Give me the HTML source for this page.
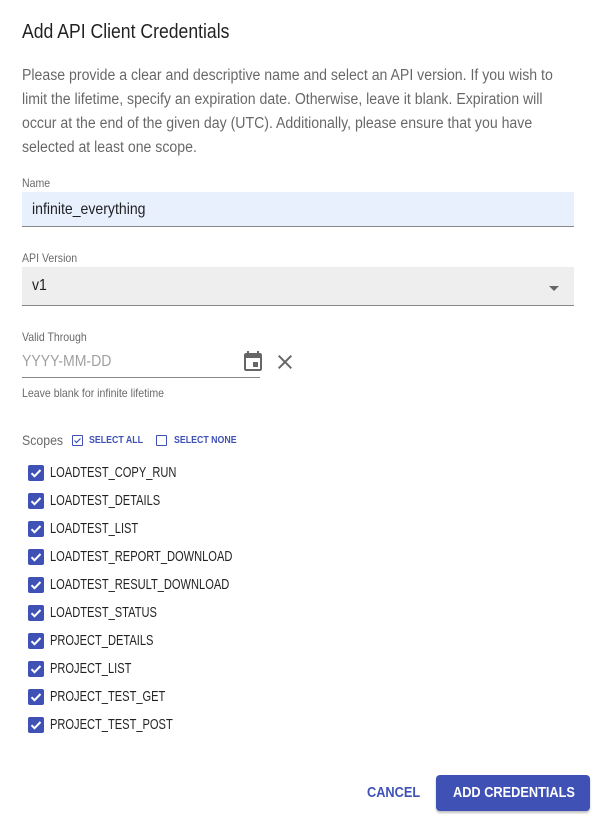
<!DOCTYPE html>
<html><head><style>
body{margin:0;width:596px;height:819px;background:#fff;font-family:"Liberation Sans",sans-serif;color:rgba(0,0,0,.87);position:relative;overflow:hidden}
.a{position:absolute;white-space:nowrap}
.c{transform:scaleX(.88);transform-origin:left}
.cb{position:absolute;left:28px;width:16px;height:16px;background:#3f51b5;border-radius:2px}
.cb svg{position:absolute;left:0;top:0}
.lab{left:50px;font-size:15px;transform:scaleX(.74)}
</style></head><body>
<div class="a c" style="left:22px;top:21px;font-size:20px">Add API Client Credentials</div>
<div class="a" style="left:22px;top:64px;font-size:15.5px;line-height:24px;color:rgba(0,0,0,.6);white-space:normal;width:590px;transform:scaleX(.91);transform-origin:left">Please provide a clear and descriptive name and select an API version. If you wish to limit the lifetime, specify an expiration date. Otherwise, leave it blank. Expiration will occur at the end of the given day (UTC). Additionally, please ensure that you have selected at least one scope.</div>
<div class="a c" style="left:22px;top:176px;font-size:12px;color:rgba(0,0,0,.6)">Name</div>
<div class="a" style="left:22px;top:192px;width:552px;height:34px;background:#e8f0fe;border-bottom:1px solid #888"></div>
<div class="a c" style="left:32px;top:201px;font-size:16px">infinite_everything</div>
<div class="a c" style="left:22px;top:251px;font-size:12px;color:rgba(0,0,0,.6)">API Version</div>
<div class="a" style="left:22px;top:267px;width:552px;height:38px;background:#eee;border-bottom:1px solid #888"></div>
<div class="a c" style="left:32px;top:277px;font-size:16px">v1</div>
<div class="a" style="left:549px;top:286px;width:0;height:0;border-left:5px solid transparent;border-right:5px solid transparent;border-top:5px solid #666"></div>
<div class="a c" style="left:22px;top:330px;font-size:12px;color:rgba(0,0,0,.6)">Valid Through</div>
<div class="a c" style="left:22px;top:353px;font-size:16px;color:rgba(0,0,0,.38)">YYYY-MM-DD</div>
<svg class="a" style="left:241px;top:350px" width="24" height="24" viewBox="0 0 24 24"><path fill="#666" d="M17 12h-5v5h5v-5zM16 1v2H8V1H6v2H5c-1.11 0-2 .9-2 2v14c0 1.1.89 2 2 2h14c1.1 0 2-.9 2-2V5c0-1.1-.9-2-2-2h-1V1h-2zm3 18H5V8h14v11z"/></svg>
<svg class="a" style="left:273px;top:350px" width="24" height="24" viewBox="0 0 24 24"><path fill="#666" d="M19 6.41L17.59 5 12 10.59 6.41 5 5 6.41 10.59 12 5 17.59 6.41 19 12 13.41 17.59 19 19 17.59 13.41 12z"/></svg>
<div class="a" style="left:22px;top:377px;width:238px;height:1px;background:#888"></div>
<div class="a c" style="left:22px;top:386px;font-size:12px;color:rgba(0,0,0,.6)">Leave blank for infinite lifetime</div>
<div class="a c" style="left:22px;top:432px;font-size:14px;color:rgba(0,0,0,.6)">Scopes</div>
<div class="a" style="left:72px;top:435px;width:9px;height:9px;border:1px solid #3f51b5;border-radius:1px"></div>
<svg class="a" style="left:72px;top:435px" width="11" height="11" viewBox="0 0 11 11"><path d="M2.5 5.5l2 2 4-4" stroke="#3f51b5" stroke-width="1.2" fill="none"/></svg>
<div class="a c" style="left:89px;top:435px;font-size:10px;font-weight:bold;color:#3f51b5">SELECT ALL</div>
<div class="a" style="left:156px;top:435px;width:9px;height:9px;border:1px solid #3f51b5;border-radius:1px"></div>
<div class="a c" style="left:174px;top:435px;font-size:10px;font-weight:bold;color:#3f51b5">SELECT NONE</div>
<div id="list"></div>
<div class="a c" style="left:367px;top:785px;font-size:14.5px;font-weight:bold;color:#3f51b5">CANCEL</div>
<div class="a" style="left:436px;top:775px;width:154px;height:36px;background:#3f51b5;border-radius:4px;box-shadow:0 2px 2px rgba(0,0,0,.25)"></div>
<div class="a c" style="left:453px;top:785px;font-size:14.5px;font-weight:bold;color:#fff">ADD CREDENTIALS</div>
<script>
var n=["LOADTEST_COPY_RUN","LOADTEST_DETAILS","LOADTEST_LIST","LOADTEST_REPORT_DOWNLOAD","LOADTEST_RESULT_DOWNLOAD","LOADTEST_STATUS","PROJECT_DETAILS","PROJECT_LIST","PROJECT_TEST_GET","PROJECT_TEST_POST"],h="";
n.forEach(function(s,i){var y=465+i*28;h+='<div class="cb" style="top:'+y+'px"><svg width="16" height="16" viewBox="0 0 16 16"><path d="M3.5 8.2l3 3 6-6.2" stroke="#fff" stroke-width="2" fill="none"/></svg></div><div class="a lab" style="top:'+(y-1.5)+'px;transform-origin:left">'+s+'</div>';});
document.getElementById("list").innerHTML=h;
</script>
</body></html>
